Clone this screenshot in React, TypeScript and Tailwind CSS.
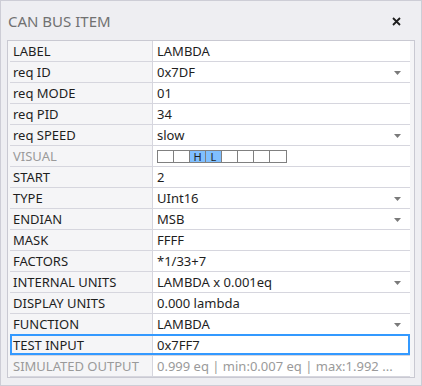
import React from 'react'

type Row = {
  label: string
  value: string
  dropdown?: boolean
  muted?: boolean
  visual?: boolean
  focused?: boolean
}

const rows: Row[] = [
  { label: 'LABEL', value: 'LAMBDA' },
  { label: 'req ID', value: '0x7DF', dropdown: true },
  { label: 'req MODE', value: '01' },
  { label: 'req PID', value: '34' },
  { label: 'req SPEED', value: 'slow', dropdown: true },
  { label: 'VISUAL', value: '', muted: true, visual: true },
  { label: 'START', value: '2' },
  { label: 'TYPE', value: 'UInt16', dropdown: true },
  { label: 'ENDIAN', value: 'MSB', dropdown: true },
  { label: 'MASK', value: 'FFFF' },
  { label: 'FACTORS', value: '*1/33+7' },
  { label: 'INTERNAL UNITS', value: 'LAMBDA x 0.001eq', dropdown: true },
  { label: 'DISPLAY UNITS', value: '0.000 lambda' },
  { label: 'FUNCTION', value: 'LAMBDA', dropdown: true },
  { label: 'TEST INPUT', value: '0x7FF7', focused: true },
  { label: 'SIMULATED OUTPUT', value: '0.999 eq | min:0.007 eq | max:1.992 ...', muted: true },
]

const bits = ['', '', 'H', 'L', '', '', '', '']

function Arrow() {
  return (
    <svg width="7" height="4" viewBox="0 0 7 4" className="absolute right-[9px] top-[9px]">
      <path d="M0 0 H7 L3.5 4 Z" fill="#7a7a7a" />
    </svg>
  )
}

function Visual() {
  return (
    <div className="flex h-[13px] border border-[#808080] bg-white">
      {bits.map((b, i) => (
        <div
          key={i}
          className={`flex h-full w-[16px] items-center justify-center text-[11px] leading-none text-[#1e1e1e] ${
            i < 7 ? 'border-r border-[#808080]' : ''
          } ${b ? 'bg-[#80bfff]' : ''}`}
        >
          {b}
        </div>
      ))}
    </div>
  )
}

export default function App() {
  return (
    <div
      className="h-[386px] w-[422px] border border-[#cdcdd6] bg-[#eeeef2] text-[13px]"
      style={{ fontFamily: '"Noto Sans", "Open Sans", sans-serif' }}
    >
      <div className="flex h-[39px] items-center justify-between pl-[7px] pr-[20px] pt-[1px]">
        <span className="text-[15px] text-[#717171]">CAN BUS ITEM</span>
        <svg width="9" height="9" viewBox="0 0 9 9">
          <path d="M1 1 L8 8 M8 1 L1 8" stroke="#1e1e1e" strokeWidth="1.8" />
        </svg>
      </div>
      <div className="ml-[6px] w-[408px] border border-[#c9c9d2] bg-[#f5f5f7] pl-[2px] pr-[4px]">
        {rows.map((r) => (
          <div
            key={r.label}
            className={`relative flex h-[21px] border-b border-[#d6d6de] leading-none ${
              r.muted ? 'text-[#9a9a9a]' : 'text-[#1e1e1e]'
            }`}
          >
            <div className="flex w-[143px] items-center whitespace-nowrap border-r border-[#d6d6de] pl-[3px] pt-[1px]">
              {r.label}
            </div>
            <div className="relative flex flex-1 items-center overflow-hidden whitespace-nowrap bg-white pl-[4px] pt-[1px]">
              {r.visual ? <Visual /> : r.value}
              {r.dropdown && <Arrow />}
            </div>
            {r.focused && (
              <div className="pointer-events-none absolute inset-x-0 -top-[1px] bottom-0 border-2 border-[#3399ff]" />
            )}
          </div>
        ))}
      </div>
    </div>
  )
}
